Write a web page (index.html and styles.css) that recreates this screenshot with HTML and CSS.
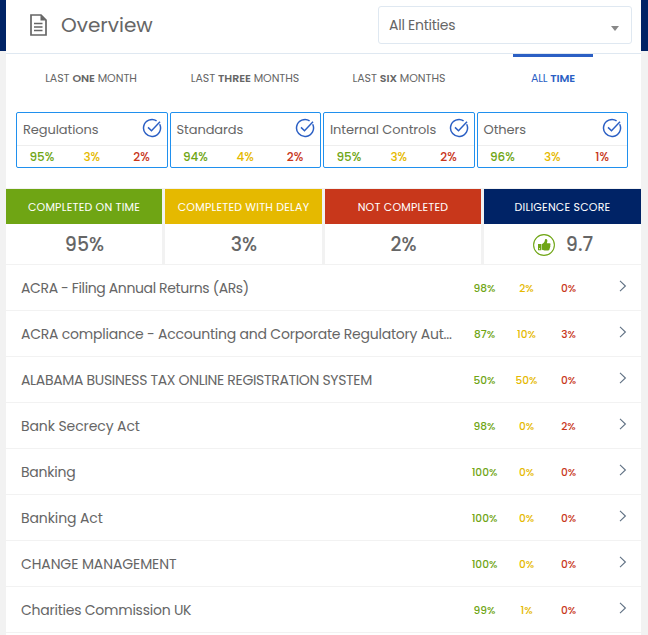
FILE: index.html
```html
<!DOCTYPE html>
<html lang="en">
<head>
<meta charset="utf-8">
<title>Overview</title>
<link rel="stylesheet" href="styles.css">
</head>
<body>
<svg class="defs" width="0" height="0" aria-hidden="true">
  <symbol id="check" viewBox="0 0 20 20"><path d="M17.7 6.3A8.5 8.5 0 1 1 14.6 2.8M6 9.4l3.5 3.3L18 3.8" fill="none" stroke="currentColor" stroke-width="1.5"/></symbol>
  <symbol id="chevron" viewBox="0 0 8 12"><path d="M1 .8L6.4 6 1 11.2" fill="none" stroke="currentColor" stroke-width="1.1"/></symbol>
</svg>
<main class="panel">
  <header class="header">
    <svg class="doc" viewBox="0 0 18 22"><path d="M1 1h10L16 6V21H1z" fill="none" stroke="currentColor" stroke-width="1.700"/><path d="M10.500 1v5.500H16z" fill="currentColor"/><path d="M4 9.500h8.500M4 13h8.500M4 16.500h8.500" stroke="currentColor" stroke-width="1.600"/></svg>
    <h1 class="title">Overview</h1>
    <div class="select"><span>All Entities</span><i class="caret"></i></div>
  </header>
  <nav class="tabs">
    <a class="tab"><span>LAST <b>ONE</b> MONTH</span></a>
    <a class="tab"><span>LAST <b>THREE</b> MONTHS</span></a>
    <a class="tab"><span>LAST <b>SIX</b> MONTHS</span></a>
    <a class="tab active"><span>ALL <b>TIME</b></span></a>
  </nav>
  <section class="cards">
    <div class="card"><div class="card-top"><span>Regulations</span><svg class="check"><use href="#check"/></svg></div><div class="card-values"><span class="green">95%</span><span class="yellow">3%</span><span class="red">2%</span></div></div>
    <div class="card"><div class="card-top"><span>Standards</span><svg class="check"><use href="#check"/></svg></div><div class="card-values"><span class="green">94%</span><span class="yellow">4%</span><span class="red">2%</span></div></div>
    <div class="card"><div class="card-top"><span>Internal Controls</span><svg class="check"><use href="#check"/></svg></div><div class="card-values"><span class="green">95%</span><span class="yellow">3%</span><span class="red">2%</span></div></div>
    <div class="card"><div class="card-top"><span>Others</span><svg class="check"><use href="#check"/></svg></div><div class="card-values"><span class="green">96%</span><span class="yellow">3%</span><span class="red">1%</span></div></div>
  </section>
  <section class="summary">
    <div class="stat"><div class="stat-head on-time">COMPLETED ON TIME</div><div class="stat-value">95%</div></div>
    <div class="stat"><div class="stat-head delayed">COMPLETED WITH DELAY</div><div class="stat-value">3%</div></div>
    <div class="stat"><div class="stat-head missed">NOT COMPLETED</div><div class="stat-value">2%</div></div>
    <div class="stat"><div class="stat-head score">DILIGENCE SCORE</div><div class="stat-value"><svg class="thumb" viewBox="0 0 22 22"><circle cx="11" cy="11" r="10.400" fill="none" stroke="currentColor" stroke-width="1.100"/><path fill-rule="evenodd" d="M5 10h3.200v6.300H5zM6 14.200v1h1v-1zM8.700 10.200c1.700-.8 3.200-2.200 3.300-4.700.1-.8 2-.8 2.300.8.200 1-.2 2.100-.5 3h2.700c1.300 0 1.300 1.400.6 1.900.7.600.4 1.500-.2 1.800.4.700.1 1.400-.5 1.700.3 1-.3 1.700-1.300 1.700h-3.600c-1 0-2-.5-2.800-.6z" fill="currentColor"/></svg><span>9.7</span></div></div>
  </section>
  <section class="list">
    <div class="row"><span class="name">ACRA - Filing Annual Returns (ARs)</span><span class="pct green">98%</span><span class="pct yellow">2%</span><span class="pct red">0%</span><svg class="chevron"><use href="#chevron"/></svg></div>
    <div class="row"><span class="name">ACRA compliance - Accounting and Corporate Regulatory Aut...</span><span class="pct green">87%</span><span class="pct yellow">10%</span><span class="pct red">3%</span><svg class="chevron"><use href="#chevron"/></svg></div>
    <div class="row"><span class="name">ALABAMA BUSINESS TAX ONLINE REGISTRATION SYSTEM</span><span class="pct green">50%</span><span class="pct yellow">50%</span><span class="pct red">0%</span><svg class="chevron"><use href="#chevron"/></svg></div>
    <div class="row"><span class="name">Bank Secrecy Act</span><span class="pct green">98%</span><span class="pct yellow">0%</span><span class="pct red">2%</span><svg class="chevron"><use href="#chevron"/></svg></div>
    <div class="row"><span class="name">Banking</span><span class="pct green">100%</span><span class="pct yellow">0%</span><span class="pct red">0%</span><svg class="chevron"><use href="#chevron"/></svg></div>
    <div class="row"><span class="name">Banking Act</span><span class="pct green">100%</span><span class="pct yellow">0%</span><span class="pct red">0%</span><svg class="chevron"><use href="#chevron"/></svg></div>
    <div class="row"><span class="name">CHANGE MANAGEMENT</span><span class="pct green">100%</span><span class="pct yellow">0%</span><span class="pct red">0%</span><svg class="chevron"><use href="#chevron"/></svg></div>
    <div class="row"><span class="name">Charities Commission UK</span><span class="pct green">99%</span><span class="pct yellow">1%</span><span class="pct red">0%</span><svg class="chevron"><use href="#chevron"/></svg></div>
  </section>
</main>
</body>
</html>
```
FILE: styles.css
```css
* { box-sizing: border-box; }
body {
  margin: 0;
  height: 635px;
  overflow: hidden;
  padding: 0 7px 0 6px;
  font-family: Poppins, Inter, sans-serif;
  color: #666;
  background: linear-gradient(#002366 51px, #f2f2f2 51px);
}
.defs { position: absolute; }
.panel { height: 635px; background: #fff; overflow: hidden; }
.header { display: flex; height: 54px; padding: 6px 9px 0 24px; border-bottom: 1px solid #dfe8f1; }
.doc { width: 18px; height: 22px; margin-top: 8px; }
.title { margin: 0 0 0 13px; font-size: 20px; line-height: 39px; font-weight: 400; }
.select { display: flex; justify-content: space-between; width: 254px; height: 38px; margin-left: auto; padding: 0 12px 0 10px; border: 1px solid #dfe8f1; border-radius: 3px; font-size: 14px; line-height: 36px; letter-spacing: -.25px; }
.caret { width: 0; height: 0; margin-top: 19px; border: 4px solid transparent; border-top: 5px solid #888; border-bottom: 0; }
.tabs { display: flex; height: 58px; padding: 0 11px 0 8px; }
.tab { flex: 1; display: flex; flex-direction: column; align-items: center; font-size: 11px; line-height: 42px; padding-top: 3px; letter-spacing: -.05px; }
.tab b { font-weight: 600; }
.active { padding-top: 0; color: #2b5fc4; letter-spacing: -.1px; }
.active::before { content: ""; width: 80px; height: 3px; background: #2b5fc4; }
.cards { display: grid; grid-template-columns: repeat(4, 1fr); gap: 2px; height: 76px; padding: 0 13px 0 10px; }
.card { height: 56px; border: 1px solid #2090ee; border-radius: 2px; }
.card-top { display: flex; justify-content: space-between; height: 33px; padding: 0 5px 0 6px; border-bottom: 1px solid #eee; font-size: 13px; line-height: 33px; white-space: nowrap; letter-spacing: -.08px; }
.check { width: 20px; height: 20px; margin-top: 5px; color: #2b5fc4; }
.card-values { display: grid; grid-template-columns: repeat(3, 1fr); text-align: center; font-size: 12px; line-height: 22px; font-weight: 500; }
.green { color: #6fa514; }
.yellow { color: #e5b900; }
.red { color: #c8371b; }
.summary { display: grid; grid-template-columns: 156px 157px 156px 157px; gap: 3px; height: 77px; border: solid #f2f2f2; border-width: 1px 0; background: #f2f2f2; text-align: center; }
.stat { height: 75px; background: #fff; }
.stat-head { height: 35px; color: #fff; font-size: 11px; line-height: 36px; white-space: nowrap; letter-spacing: .2px; }
.on-time { background: #6fa514; }
.delayed { background: #e5b900; }
.missed { background: #c8371b; }
.score { background: #002366; }
.stat-value { display: flex; justify-content: center; height: 40px; padding-left: 1px; font-size: 19px; line-height: 41px; font-weight: 500; }
.thumb { width: 22px; height: 22px; margin: 10px 11px 0 0; color: #6fa514; }
.row { display: flex; height: 46px; padding-left: 15px; border-bottom: 1px solid #f2f2f2; line-height: 46px; }
.name { width: 442px; font-size: 14px; white-space: nowrap; letter-spacing: -.1px; }
.row:nth-child(1) .name { letter-spacing: -.37px; }
.row:nth-child(2) .name { letter-spacing: -.22px; }
.row:nth-child(3) .name { letter-spacing: -.33px; }
.row:nth-child(5) .name,
.row:nth-child(8) .name { letter-spacing: -.24px; }
.pct { width: 42px; padding-left: 1px; text-align: center; font-size: 10.600px; line-height: 47px; font-weight: 500; }
.chevron { width: 8px; height: 12px; margin: 15px 0 0 30px; color: #5f7083; }
```
